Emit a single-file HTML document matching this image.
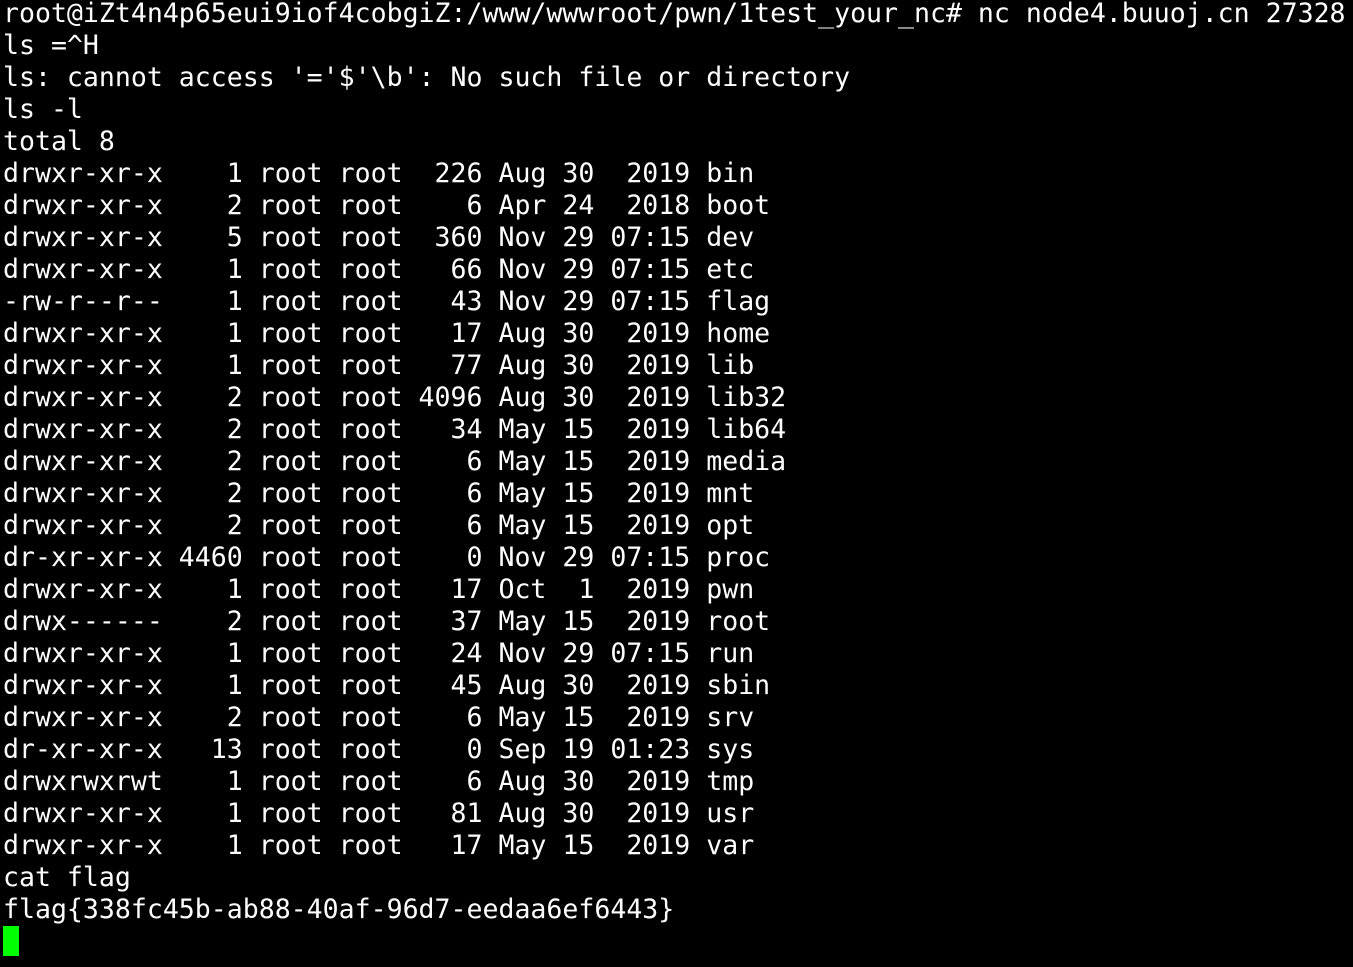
<!DOCTYPE html>
<html><head><meta charset="utf-8"><style>
html,body{margin:0;padding:0;background:#000;width:1353px;height:967px;overflow:hidden}
pre{margin:-2px 0 0 3px;font-family:"DejaVu Sans Mono","Liberation Mono",monospace;font-size:26.55px;line-height:32px;color:#fff;white-space:pre}
.c{display:inline-block;width:16px;height:30px;background:#00ff00;vertical-align:top;margin-top:0px}
</style></head><body><pre>root@iZt4n4p65eui9iof4cobgiZ:/www/wwwroot/pwn/1test_your_nc# nc node4.buuoj.cn 27328
ls =^H
ls: cannot access '='$'\b': No such file or directory
ls -l
total 8
drwxr-xr-x    1 root root  226 Aug 30  2019 bin
drwxr-xr-x    2 root root    6 Apr 24  2018 boot
drwxr-xr-x    5 root root  360 Nov 29 07:15 dev
drwxr-xr-x    1 root root   66 Nov 29 07:15 etc
-rw-r--r--    1 root root   43 Nov 29 07:15 flag
drwxr-xr-x    1 root root   17 Aug 30  2019 home
drwxr-xr-x    1 root root   77 Aug 30  2019 lib
drwxr-xr-x    2 root root 4096 Aug 30  2019 lib32
drwxr-xr-x    2 root root   34 May 15  2019 lib64
drwxr-xr-x    2 root root    6 May 15  2019 media
drwxr-xr-x    2 root root    6 May 15  2019 mnt
drwxr-xr-x    2 root root    6 May 15  2019 opt
dr-xr-xr-x 4460 root root    0 Nov 29 07:15 proc
drwxr-xr-x    1 root root   17 Oct  1  2019 pwn
drwx------    2 root root   37 May 15  2019 root
drwxr-xr-x    1 root root   24 Nov 29 07:15 run
drwxr-xr-x    1 root root   45 Aug 30  2019 sbin
drwxr-xr-x    2 root root    6 May 15  2019 srv
dr-xr-xr-x   13 root root    0 Sep 19 01:23 sys
drwxrwxrwt    1 root root    6 Aug 30  2019 tmp
drwxr-xr-x    1 root root   81 Aug 30  2019 usr
drwxr-xr-x    1 root root   17 May 15  2019 var
cat flag
flag{338fc45b-ab88-40af-96d7-eedaa6ef6443}
<span class="c"></span></pre></body></html>
